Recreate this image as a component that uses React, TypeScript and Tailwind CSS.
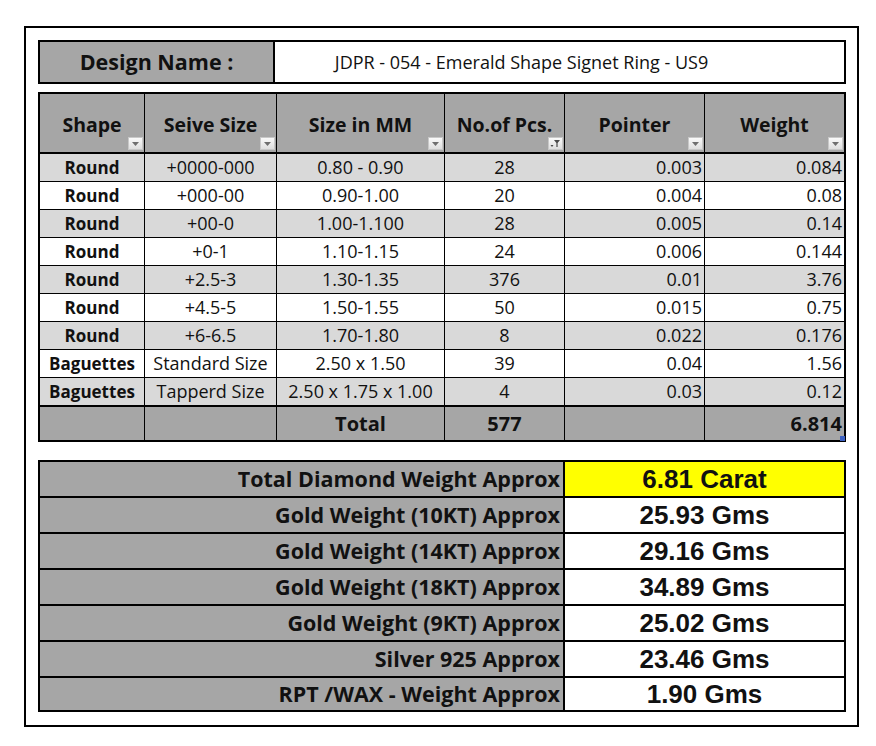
import React from 'react'

type Row = {
  shape: string
  seive: string
  mm: string
  pcs: string
  pointer: string
  weight: string
}

const rows: Row[] = [
  { shape: 'Round', seive: '+0000-000', mm: '0.80 - 0.90', pcs: '28', pointer: '0.003', weight: '0.084' },
  { shape: 'Round', seive: '+000-00', mm: '0.90-1.00', pcs: '20', pointer: '0.004', weight: '0.08' },
  { shape: 'Round', seive: '+00-0', mm: '1.00-1.100', pcs: '28', pointer: '0.005', weight: '0.14' },
  { shape: 'Round', seive: '+0-1', mm: '1.10-1.15', pcs: '24', pointer: '0.006', weight: '0.144' },
  { shape: 'Round', seive: '+2.5-3', mm: '1.30-1.35', pcs: '376', pointer: '0.01', weight: '3.76' },
  { shape: 'Round', seive: '+4.5-5', mm: '1.50-1.55', pcs: '50', pointer: '0.015', weight: '0.75' },
  { shape: 'Round', seive: '+6-6.5', mm: '1.70-1.80', pcs: '8', pointer: '0.022', weight: '0.176' },
  { shape: 'Baguettes', seive: 'Standard Size', mm: '2.50 x 1.50', pcs: '39', pointer: '0.04', weight: '1.56' },
  { shape: 'Baguettes', seive: 'Tapperd Size', mm: '2.50 x 1.75 x 1.00', pcs: '4', pointer: '0.03', weight: '0.12' },
]

const summary = [
  { label: 'Total Diamond Weight Approx', value: '6.81 Carat', hi: true },
  { label: 'Gold Weight (10KT) Approx', value: '25.93 Gms' },
  { label: 'Gold Weight (14KT) Approx', value: '29.16 Gms' },
  { label: 'Gold Weight (18KT) Approx', value: '34.89 Gms' },
  { label: 'Gold Weight (9KT) Approx', value: '25.02 Gms' },
  { label: 'Silver 925 Approx', value: '23.46 Gms' },
  { label: 'RPT /WAX - Weight Approx', value: '1.90 Gms' },
]

const cols = 'grid grid-cols-[104px_132px_168px_120px_140px_140px]'

const Dropdown = ({ filter = false }: { filter?: boolean }) => (
  <span className="absolute right-[1px] bottom-[2px] flex h-[13px] w-[15px] items-center justify-center border border-[#c8c8c8] bg-gradient-to-b from-[#fafafa] to-[#dedede]">
    {filter ? (
      <svg width="11" height="9" viewBox="0 0 11 9">
        <path d="M4 1h6L7.6 4v4H6.4V4z" fill="#4a4a4a" />
        <path d="M0.5 6h3L2 8z" fill="#4a4a4a" />
      </svg>
    ) : (
      <svg width="7" height="4" viewBox="0 0 7 4">
        <path d="M0 0h7L3.5 4z" fill="#6e6e6e" />
      </svg>
    )}
  </span>
)

const headers = ['Shape', 'Seive Size', 'Size in MM', 'No.of Pcs.', 'Pointer', 'Weight']

export default function App() {
  return (
    <div className="min-h-[746px] w-[876px] bg-white pl-[24px] pt-[26px] font-['Open_Sans',sans-serif] text-[#111]">
      <div className="flex w-[835px] flex-col border-2 border-black pl-[12px] pr-[11px] pt-[12px] pb-[13px]">
        {/* design name */}
        <div className="flex h-[44px] w-[808px] border-2 border-black">
          <div className="flex w-[235px] items-center justify-center border-r-2 border-black bg-[#a6a6a6] text-[21.5px] font-bold">
            Design Name :
          </div>
          <div className="flex flex-1 items-center justify-center pr-[76px] text-[18px]">
            JDPR - 054 - Emerald Shape Signet Ring - US9
          </div>
        </div>

        {/* stones table */}
        <div className="mt-[8px] w-[808px] border-2 border-black text-[18px]">
          <div className={`${cols} h-[60px] border-b-2 border-black bg-[#a6a6a6] text-[19.5px] font-bold`}>
            {headers.map((h, i) => (
              <div
                key={h}
                className={`relative flex items-center justify-center pt-[4px] ${i > 0 ? 'border-l border-black' : ''}`}
              >
                {h}
                <Dropdown filter={i === 3} />
              </div>
            ))}
          </div>
          {rows.map((r, idx) => (
            <div
              key={idx}
              className={`${cols} ${idx === rows.length - 1 ? 'h-[29px] border-b-2' : 'h-[28px] border-b'} border-black ${idx % 2 === 0 ? 'bg-[#d9d9d9]' : 'bg-white'}`}
            >
              <div className="flex items-center justify-center text-[17px] font-bold">{r.shape}</div>
              <div className="flex items-center justify-center border-l border-black">{r.seive}</div>
              <div className="flex items-center justify-center border-l border-black">{r.mm}</div>
              <div className="flex items-center justify-center border-l border-black">{r.pcs}</div>
              <div className="flex items-center justify-end border-l border-black pr-[2px]">{r.pointer}</div>
              <div className="flex items-center justify-end border-l border-black pr-[2px]">{r.weight}</div>
            </div>
          ))}
          <div className={`${cols} h-[33px] bg-[#a6a6a6] text-[20px] font-bold`}>
            <div />
            <div className="border-l border-black" />
            <div className="flex items-center justify-center border-l border-black">Total</div>
            <div className="flex items-center justify-center border-l border-black">577</div>
            <div className="border-l border-black" />
            <div className="relative flex items-center justify-end border-l border-black pr-[2px]">
              6.814
              <span className="absolute -right-[1px] -bottom-[1px] h-[5px] w-[5px] bg-[#3b5fc0]" />
            </div>
          </div>
        </div>

        {/* summary table */}
        <div className="mt-[18px] w-[808px] border-2 border-black">
          {summary.map((s, i) => (
            <div
              key={s.label}
              className={`flex ${i < summary.length - 1 ? 'h-[36px] border-b-2 border-black' : 'h-[32px]'}`}
            >
              <div className="flex w-[523px] items-center justify-end bg-[#a6a6a6] pr-[3px] text-[21.5px] font-bold">
                {s.label}
              </div>
              <div
                className={`flex flex-1 items-center justify-center border-l-2 border-black font-['Liberation_Sans',sans-serif] text-[26px] font-bold ${s.hi ? 'bg-[#ffff00]' : 'bg-white'}`}
              >
                {s.value}
              </div>
            </div>
          ))}
        </div>
      </div>
    </div>
  )
}
